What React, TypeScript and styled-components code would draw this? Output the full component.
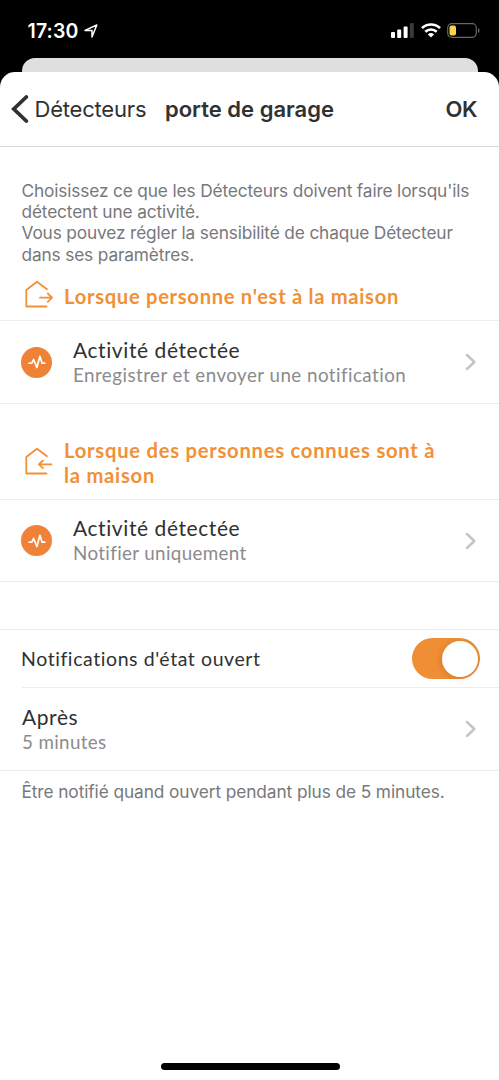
import React from 'react';
import styled, { createGlobalStyle } from 'styled-components';

const Global = createGlobalStyle`
  * { box-sizing: border-box; }
  html, body { margin: 0; padding: 0; background: #000; }
  body { font-family: Inter, "Liberation Sans", sans-serif; -webkit-font-smoothing: antialiased; font-variant-ligatures: none; }
`;

const Screen = styled.div`
  width: 499px;
  height: 1080px;
  display: flex;
  flex-direction: column;
  background: #000;
  overflow: hidden;
`;

const StatusBar = styled.header`
  height: 58px;
  flex: none;
  display: flex;
  align-items: center;
  justify-content: space-between;
  padding: 3px 19px 0 27.5px;
  color: #fff;
`;

const StatusGroup = styled.div<{ $gap: number }>`
  display: flex;
  align-items: center;
  gap: ${p => p.$gap}px;
`;

const Time = styled.span`
  font-size: 19.5px;
  line-height: 24px;
  font-weight: 600;
  letter-spacing: 0.15px;
`;

const SheetBehind = styled.div`
  height: 14px;
  flex: none;
  margin: 0 21.5px 0 21.5px;
  border-radius: 13px 13px 0 0;
  background: #e0dfe0;
`;

const Sheet = styled.main`
  flex: 1;
  display: flex;
  flex-direction: column;
  background: #fff;
  border-radius: 15px 15px 0 0;
`;

const NavBar = styled.nav`
  height: 75px;
  flex: none;
  display: flex;
  align-items: center;
  padding: 0 22px 0 11px;
  border-bottom: 1px solid #d9d9d9;
  color: #303132;
  font-size: 22px;
  line-height: 28px;
`;

const Back = styled.button`
  display: flex;
  align-items: center;
  gap: 5.5px;
  width: 154px;
  padding: 0;
  border: 0;
  background: none;
  color: inherit;
  font: inherit;
  letter-spacing: -0.2px;
  white-space: nowrap;
`;

const Title = styled.h1`
  flex: 1;
  margin: 0;
  font-size: 22px;
  font-weight: 600;
  letter-spacing: 0;
  white-space: nowrap;
`;

const Done = styled.span`
  font-weight: 600;
  letter-spacing: -0.5px;
`;

const Note = styled.p<{ $spacing: number }>`
  margin: 0;
  color: #77787b;
  font-size: 17.3px;
  line-height: 21.3px;
  letter-spacing: ${p => p.$spacing}px;
  white-space: nowrap;
`;

const Intro = styled.section`
  height: 118px;
  flex: none;
  padding: 32.8px 0 0 21.5px;
`;

const Footnote = styled.footer`
  padding: 10px 0 0 21.5px;
  border-top: 1px solid #ececed;
`;

const SectionHeading = styled.div<{ $height: number; $top: number }>`
  height: ${p => p.$height}px;
  flex: none;
  padding: ${p => p.$top}px 22px 0 22.5px;
  display: flex;
  align-items: flex-start;
  gap: 11.5px;
  color: #f29036;
`;

const HeadingText = styled.h2<{ $top?: number; $spacing?: number }>`
  margin: 0;
  padding-top: ${p => p.$top ?? 0}px;
  font-family: Lato, sans-serif;
  font-size: 20.2px;
  line-height: 25px;
  font-weight: 700;
  letter-spacing: ${p => p.$spacing ?? 0.69}px;
  white-space: nowrap;
`;

const HouseSlot = styled.span<{ $top: number }>`
  display: flex;
  padding-top: ${p => p.$top}px;
`;

const Row = styled.div<{ $height: number; $inset?: boolean; $bottom?: boolean }>`
  height: ${p => p.$height}px;
  flex: none;
  display: flex;
  align-items: center;
  margin-left: ${p => (p.$inset ? 22 : 0)}px;
  padding: 0 23px 0 ${p => (p.$inset ? 0 : 21)}px;
  border-top: 1px solid #ececed;
  border-bottom: ${p => (p.$bottom ? '1px solid #ececed' : '0')};
`;

const Badge = styled.span`
  width: 31px;
  height: 31px;
  flex: none;
  margin-right: 21px;
  display: flex;
  align-items: center;
  justify-content: center;
  border-radius: 50%;
  background: #f08238;
`;

const RowText = styled.div<{ $lift?: number }>`
  flex: 1;
  padding-bottom: ${p => p.$lift ?? 0}px;
  display: flex;
  flex-direction: column;
  font-family: Lato, sans-serif;
  white-space: nowrap;
`;

const Label = styled.span<{ $size?: number }>`
  color: #303132;
  font-size: ${p => p.$size ?? 21}px;
  line-height: 25px;
  letter-spacing: 0.58px;
`;

const Detail = styled.span<{ $spacing?: number }>`
  color: #8b8b8c;
  font-size: 18.8px;
  line-height: 26px;
  letter-spacing: ${p => p.$spacing ?? 0.36}px;
`;

const Toggle = styled.span`
  width: 68px;
  height: 41px;
  margin-right: -4.4px;
  padding: 2.5px;
  display: flex;
  justify-content: flex-end;
  border-radius: 21px;
  background: #ef8e35;
`;

const Knob = styled.span`
  width: 36px;
  height: 36px;
  border-radius: 50%;
  background: #fff;
  box-shadow: -1px 1px 6px rgba(0, 0, 0, 0.14);
`;

const Spacer = styled.div`
  height: 47px;
  flex: none;
`;

const HomeIndicator = styled.div`
  width: 179px;
  height: 7px;
  margin: auto auto 10.5px 160.5px;
  border-radius: 4px;
  background: #000;
`;

const House = ({ leaving }: { leaving?: boolean }) => (
  <svg width="30" height="28" viewBox="0 0 30 28" fill="none" stroke="currentColor" strokeWidth="1.8" strokeLinecap="round" strokeLinejoin="round">
    <path d="M24 9.300 14 1.800 3.300 10v16.500H23.500" />
    {leaving ? <path d="M17 17.700h12M24.800 13.500l4.200 4.200-4.200 4.200" /> : <path d="M28.500 17.300H16M20 13.500l-4.200 3.800 4.200 3.800" />}
  </svg>
);

const Chevron = () => (
  <svg width="11" height="18" viewBox="0 0 11 18" fill="none" stroke="#c4c4c6" strokeWidth="2.500" strokeLinecap="round" strokeLinejoin="round">
    <path d="M2 2l7.300 7L2 16" />
  </svg>
);

const Pulse = () => (
  <svg width="18" height="14" viewBox="0 0 18 14" fill="none" stroke="#fff" strokeWidth="1.700" strokeLinecap="round" strokeLinejoin="round">
    <path d="M1.200 8.200h2.600L5.600 4.500l3.300 8 3-11.200 2.200 6.900h2.700" />
  </svg>
);

export default function App() {
  return (
    <Screen>
      <Global />
      <StatusBar>
        <StatusGroup $gap={5}>
          <Time>17:30</Time>
          <svg width="14" height="14" viewBox="0 0 14 14" fill="none" stroke="#fff" strokeWidth="1.500" strokeLinejoin="round">
            <path d="M1 6.400 12.800 1 8 13V6.600z" />
          </svg>
        </StatusGroup>
        <StatusGroup $gap={6.5}>
          <svg width="23" height="15" viewBox="0 0 23 15" fill="#fff">
            <rect x="0" y="9" width="4" height="6" rx="1" />
            <rect x="6.200" y="6.500" width="4" height="8.500" rx="1" />
            <rect x="12.600" y="3.500" width="4" height="11.500" rx="1" />
            <rect x="18.800" y="0" width="4" height="15" rx="1" fill="#3a3a3a" />
          </svg>
          <svg width="20" height="15" viewBox="0 0 20 15" fill="none" stroke="#fff" strokeWidth="2.700">
            <path d="M1 5.100a13 13 0 0 1 18 0" />
            <path d="M4.300 8.800a8.200 8.200 0 0 1 11.400 0" />
            <path d="M6.900 11.400a4.500 4.500 0 0 1 6.200 0L10 14.600z" fill="#fff" stroke="none" />
          </svg>
          <svg width="33" height="15" viewBox="0 0 33 15">
            <rect x="0.700" y="0.700" width="28.600" height="13.600" rx="4" fill="none" stroke="#666" strokeWidth="1.200" />
            <rect x="2.500" y="2.500" width="6.500" height="10" rx="2" fill="#f8d648" />
            <path d="M31 5c2 .8 2 4.200 0 5z" fill="#666" />
          </svg>
        </StatusGroup>
      </StatusBar>
      <SheetBehind />
      <Sheet>
        <NavBar>
          <Back>
            <svg width="18" height="28" viewBox="0 0 18 28" fill="none" stroke="currentColor" strokeWidth="3.800">
              <path d="M15.300 2 2.800 14l12.500 12" strokeLinecap="round" />
            </svg>
            Détecteurs
          </Back>
          <Title>porte de garage</Title>
          <Done>OK</Done>
        </NavBar>
        <Intro>
          <Note $spacing={-0.15}>
            Choisissez ce que les Détecteurs doivent faire lorsqu'ils<br />
            détectent une activité.<br />
            Vous pouvez régler la sensibilité de chaque Détecteur<br />
            dans ses paramètres.
          </Note>
        </Intro>
        <SectionHeading $height={55} $top={14.5}>
          <HouseSlot $top={0}><House leaving /></HouseSlot>
          <HeadingText $top={4}>Lorsque personne n'est à la maison</HeadingText>
        </SectionHeading>
        <Row $height={84} $bottom>
          <Badge><Pulse /></Badge>
          <RowText>
            <Label>Activité détectée</Label>
            <Detail $spacing={0.45}>Enregistrer et envoyer une notification</Detail>
          </RowText>
          <Chevron />
        </Row>
        <SectionHeading $height={95} $top={34}>
          <HouseSlot $top={8.5}><House /></HouseSlot>
          <HeadingText $spacing={0.75}>Lorsque des personnes connues sont à<br />la maison</HeadingText>
        </SectionHeading>
        <Row $height={83} $bottom>
          <Badge><Pulse /></Badge>
          <RowText>
            <Label>Activité détectée</Label>
            <Detail>Notifier uniquement</Detail>
          </RowText>
          <Chevron />
        </Row>
        <Spacer />
        <Row $height={58}>
          <RowText $lift={1}><Label $size={19.5}>Notifications d'état ouvert</Label></RowText>
          <Toggle><Knob /></Toggle>
        </Row>
        <Row $height={83} $inset>
          <RowText>
            <Label>Après</Label>
            <Detail>5 minutes</Detail>
          </RowText>
          <Chevron />
        </Row>
        <Footnote>
          <Note $spacing={-0.09}>Être notifié quand ouvert pendant plus de 5 minutes.</Note>
        </Footnote>
        <HomeIndicator />
      </Sheet>
    </Screen>
  );
}
